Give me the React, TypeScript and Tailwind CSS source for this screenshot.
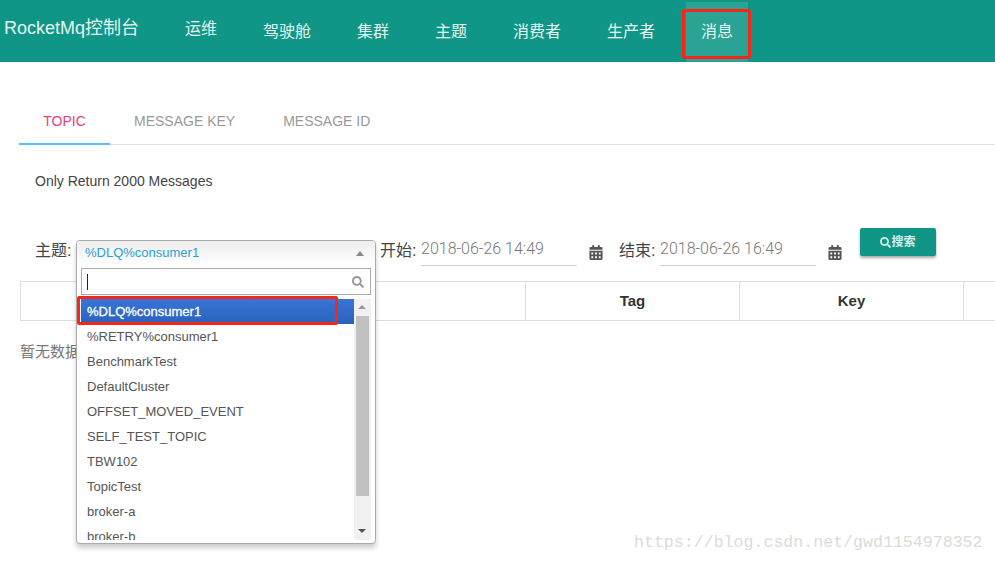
import React from 'react';
import { FaCalendarAlt, FaSearch } from 'react-icons/fa';

const NAV_ITEMS = ['运维', '驾驶舱', '集群', '主题', '消费者', '生产者', '消息'];
const TOPICS = ['%RETRY%consumer1', 'BenchmarkTest', 'DefaultCluster', 'OFFSET_MOVED_EVENT', 'SELF_TEST_TOPIC', 'TBW102', 'TopicTest', 'broker-a', 'broker-b'];
const FONT = "font-['Liberation_Sans','Noto_Sans_CJK_SC',sans-serif]";

const DateField: React.FC<{ label: string; value: string }> = ({ label, value }) => (
    <div className="flex items-start">
        <span className="text-[16px] leading-[22px] mt-[11px] text-[#444] whitespace-nowrap w-[41px]">{label}</span>
        <div className="w-[156px] h-[37px] border-b border-[#d0d0d0] font-['Roboto',sans-serif] font-light text-[16px] leading-[22px] pt-[9px] text-[#777]">{value}</div>
        <FaCalendarAlt className="ml-[12px] mt-[16px] text-[#555] w-[14px] h-[15px]" />
    </div>
);

const TopicDropdown: React.FC = () => (
    <div className="absolute left-[76px] top-[240px] w-[300px] h-[304px] bg-white border border-[#aaa] rounded-[4px] shadow-[0_4px_5px_rgba(0,0,0,0.2)] overflow-hidden">
        <div className="h-[24px] flex items-center justify-between pl-[8px] pr-[11px] bg-gradient-to-b from-[#eeeeee] to-white">
            <span className="text-[13px] text-[#2a9fd6]">%DLQ%consumer1</span>
            <span className="w-0 h-0 border-x-[4px] border-x-transparent border-b-[5px] border-b-[#888]" />
        </div>
        <div className="mx-[4px] mt-[3px] h-[27px] border border-[#aaa] flex items-center justify-between pl-[5px] pr-[6px]">
            <span className="w-px h-[16px] bg-[#222]" />
            <FaSearch className="w-[12px] h-[12px] text-[#999]" />
        </div>
        <div className="flex ml-[4px] mt-[4px] w-[290px] h-[241px]">
            <div className="flex-1 overflow-hidden">
                <div className="h-[25px] pl-[6px] flex items-center text-[13px] text-white [-webkit-text-stroke:0.3px_white] bg-gradient-to-b from-[#3875d7] to-[#2a62bc]">%DLQ%consumer1</div>
                {TOPICS.map(topic => (
                    <div key={topic} className="h-[25px] pl-[6px] flex items-center text-[13px] text-[#555] shrink-0">{topic}</div>
                ))}
            </div>
            <div className="relative w-[17px] bg-[#f1f1f1]">
                <span className="absolute left-[4px] top-[6px] w-0 h-0 border-x-[4px] border-x-transparent border-b-[4px] border-b-[#999]" />
                <div className="absolute left-[2px] top-[17px] w-[13px] h-[180px] bg-[#c1c1c1]" />
                <span className="absolute left-[4px] bottom-[7px] w-0 h-0 border-x-[4px] border-x-transparent border-t-[4px] border-t-[#555]" />
            </div>
        </div>
    </div>
);

const App: React.FC = () => {
    return (
        <div className={`relative w-[995px] h-[563px] overflow-hidden bg-white ${FONT}`}>
            {/* Top bar */}
            <header className="h-[62px] bg-[#109687] flex items-start text-[#e4f4f0]">
                <div className="w-[162px] pl-[4px] pt-[15px] text-[18px] leading-[26px] whitespace-nowrap">RocketMq控制台</div>
                <nav className="flex">
                    {NAV_ITEMS.map((item, i) => (
                        <div
                            key={item}
                            className={`mx-[8px] px-[15px] text-[16px] leading-[22px] whitespace-nowrap ${i === 0 ? 'pt-[18px] h-[62px]' : 'pt-[21px] h-[62px]'} ${item === '消息' ? 'bg-[#2aa294] mt-[2px] !h-[60px] !pt-[19px]' : ''}`}
                        >
                            {item}
                        </div>
                    ))}
                </nav>
            </header>

            <main className="px-[20px]">
                {/* Tabs */}
                <div className="mt-[36px] -ml-px -mr-[20px] h-[47px] flex border-b border-[#e0e0e0] text-[14px]">
                    <div className="w-[91px] h-[47px] pt-[2px] border-b-2 border-[#4fc3f7] flex items-center justify-center text-[#ec407a]">TOPIC</div>
                    <div className="px-[24px] h-[46px] flex items-center text-[#999]">MESSAGE KEY</div>
                    <div className="px-[24px] h-[46px] flex items-center text-[#999]">MESSAGE ID</div>
                </div>

                <p className="ml-[15px] mt-[26px] text-[14px] leading-[20px] text-[#444]">Only Return 2000 Messages</p>

                {/* Search form */}
                <div className="mt-[38px] h-[52px] flex items-start ml-[15px]">
                    <span className="text-[16px] leading-[22px] mt-[11px] text-[#444] w-[345px] shrink-0">主题:</span>
                    <DateField label="开始:" value="2018-06-26 14:49" />
                    <div className="w-[16px]" />
                    <DateField label="结束:" value="2018-06-26 16:49" />
                    <button className="ml-[18px] -mt-px w-[76px] h-[28px] rounded-[2px] bg-[#109687] text-[#d8f0ea] text-[12px] font-bold flex items-center justify-center shadow-[0_2px_3px_rgba(0,0,0,0.35)]">
                        <FaSearch className="w-[11px] h-[11px]" />
                        搜索
                    </button>
                </div>

                {/* Table */}
                <div className="-mr-[20px] h-[40px] grid grid-cols-[505px_214px_224px_1fr] border border-[#ddd] border-r-0 text-[15px] font-bold text-[#333] items-stretch">
                    <div className="border-r border-[#ddd]" />
                    <div className="border-r border-[#ddd] flex items-center justify-center">Tag</div>
                    <div className="border-r border-[#ddd] flex items-center justify-center">Key</div>
                    <div />
                </div>
                <p className="mt-[21px] text-[15px] leading-[20px] text-[#777]">暂无数据</p>
            </main>

            <TopicDropdown />

            {/* Red annotation boxes */}
            <div className="absolute left-[682px] top-[9px] w-[69px] h-[50px] border-[3px] border-[#f92516] rounded-[3px]" />
            <div className="absolute left-[77px] top-[296px] w-[261px] h-[29px] border-[3px] border-[#f92516] rounded-[2px]" />

            {/* Watermark */}
            <div className="absolute left-[634px] top-[533px] font-['Liberation_Mono',monospace] text-[16.6px] leading-[20px] text-[#dddbd6] whitespace-nowrap">https://blog.csdn.net/gwd1154978352</div>
        </div>
    );
};

export default App;
